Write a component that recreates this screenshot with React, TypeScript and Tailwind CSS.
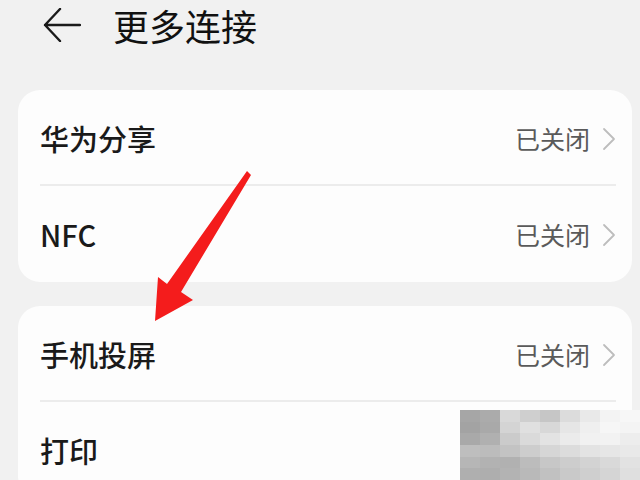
import React from "react";

const font = { fontFamily: '"Noto Sans CJK SC", "Noto Sans", sans-serif' };

type Item = { label: string; status?: string };

const groups: Item[][] = [
  [
    { label: "华为分享", status: "已关闭" },
    { label: "NFC", status: "已关闭" },
  ],
  [
    { label: "手机投屏", status: "已关闭" },
    { label: "打印" },
  ],
];

const mosaic = [
  ["#a6a6a6", "#ababab", "#d9d9d9", "#cfcfcf", "#c6c6c6", "#dcdcdc", "#e9e9e9", "#f3f3f3", "#f7f7f7"],
  ["#a3a3a3", "#a9a9a9", "#d4d4d4", "#e0e0e0", "#d8d8d8", "#e6e6e6", "#efefef", "#f6f6f6", "#f4f4f4"],
  ["#a9a9a9", "#b0b0b0", "#cbcbcb", "#dadada", "#e3e3e3", "#ebebeb", "#f1f1f1", "#f2f2f2", "#ededed"],
  ["#bebebe", "#bcbcbc", "#c3c3c3", "#cdcdcd", "#d6d6d6", "#dcdcdc", "#e3e3e3", "#e6e6e6", "#e9e9e9"],
  ["#b6b6b6", "#b2b2b2", "#b1b1b1", "#bcbcbc", "#c7c7c7", "#cdcdcd", "#d3d3d3", "#d9d9d9", "#e2e2e2"],
  ["#afafaf", "#aeaeae", "#b3b3b3", "#b9b9b9", "#c1c1c1", "#c9c9c9", "#cfcfcf", "#d5d5d5", "#dfdfdf"],
];

function Chevron() {
  return (
    <svg width="14" height="24" viewBox="0 0 14 24" fill="none">
      <path d="M2 2 L12 12 L2 22" stroke="#bdbdbd" strokeWidth="1.8" strokeLinecap="round" strokeLinejoin="round" />
    </svg>
  );
}

function Row({ item, last }: { item: Item; last: boolean }) {
  return (
    <div className="ml-[22px] mr-[16px] h-[96px] flex items-center justify-between relative">
      <span className="text-[29px] text-[#1a1a1a] font-medium pt-[2px]">{item.label}</span>
      {item.status && (
        <div className="flex items-center gap-[12px] pt-[2px]">
          <span className="text-[25px] text-[#5a5a5a]">{item.status}</span>
          <Chevron />
        </div>
      )}
      {!last && <div className="absolute left-0 right-0 bottom-0 h-[2px] bg-[#ececec]" />}
    </div>
  );
}

export default function App() {
  return (
    <div className="w-[640px] h-[480px] overflow-hidden bg-[#f1f1f1] relative" style={font}>
      <div className="h-[50px] flex items-center pl-[43px]">
        <svg width="38" height="34" viewBox="0 0 38 34" fill="none">
          <path d="M17 1 L2 17 L17 33 M2 17 L37 17" stroke="#1a1a1a" strokeWidth="2.4" strokeLinecap="round" strokeLinejoin="round" />
        </svg>
        <span className="ml-[32px] text-[36px] text-[#111]">更多连接</span>
      </div>

      <div className="mt-[40px] ml-[18px] mr-[8px] flex flex-col gap-[24px]">
        {groups.map((g, gi) => (
          <div key={gi} className="bg-[#fdfdfd] rounded-[22px]">
            {g.map((it, i) => (
              <Row key={it.label} item={it} last={i === g.length - 1} />
            ))}
          </div>
        ))}
      </div>

      {/* pixelated blur */}
      <div className="absolute left-[460px] top-[410px] w-[180px] h-[70px] grid grid-cols-9 grid-rows-6">
        {mosaic.flat().map((c, i) => (
          <div key={i} style={{ backgroundColor: c }} />
        ))}
      </div>

      {/* red annotation arrow */}
      <svg className="absolute left-0 top-0" width="640" height="480" viewBox="0 0 640 480">
        <polygon
          points="247,171 251,175 181,292 193,300 155,321 158,277 167,284"
          fill="#f41c1c"
        />
      </svg>
    </div>
  );
}
